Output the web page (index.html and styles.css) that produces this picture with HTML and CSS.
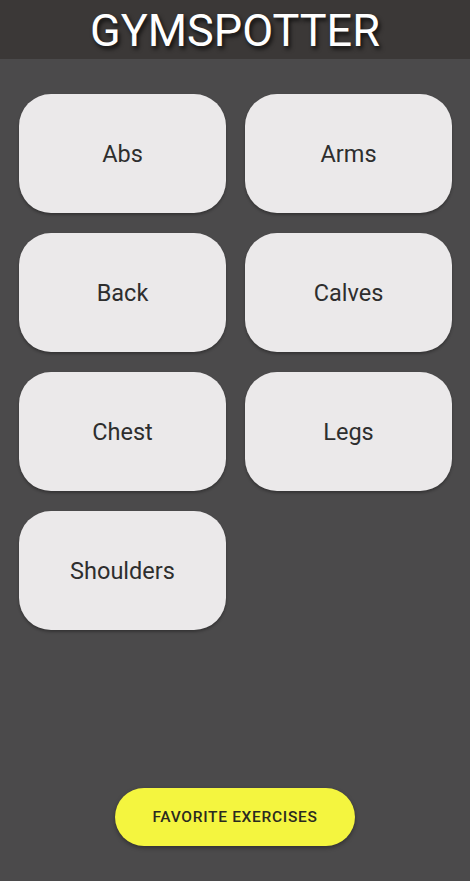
FILE: index.html
```html
<!DOCTYPE html>
<html>
<head>
<meta charset="utf-8">
<link rel="stylesheet" href="styles.css">
</head>
<body>
<div class="app">
  <header class="topbar"><h1 class="title">GYMSPOTTER</h1></header>
  <main class="grid">
    <button class="card">Abs</button>
    <button class="card">Arms</button>
    <button class="card">Back</button>
    <button class="card">Calves</button>
    <button class="card">Chest</button>
    <button class="card">Legs</button>
    <button class="card">Shoulders</button>
  </main>
  <footer class="footer"><button class="fav">FAVORITE EXERCISES</button></footer>
</div>
</body>
</html>
```
FILE: styles.css
```css
html, body { margin: 0; padding: 0; height: 100%; }
body { background: #4b4a4b; font-family: Roboto, "Noto Sans", sans-serif; }
.app { display: flex; flex-direction: column; height: 881px; }
.topbar { background: #3b3837; height: 59px; display: flex; align-items: center; justify-content: center; }
.title { margin: 0; color: #fff; font-weight: 400; font-size: 45px; letter-spacing: 0; text-shadow: 2px 3px 4px rgba(0,0,0,0.75); line-height: 1; position: relative; top: 1px; }
.grid { display: grid; grid-template-columns: 207px 207px; grid-auto-rows: 119px; column-gap: 19px; row-gap: 20px; padding: 35px 19px 0 19px; }
.card { border: none; background: #ebe9ea; border-radius: 32px; font-family: Roboto, sans-serif; font-size: 23.5px; color: #2e2e2e; box-shadow: 0 2px 3px rgba(0,0,0,0.3); padding: 0; }
.footer { margin-top: auto; display: flex; justify-content: center; padding-bottom: 35px; }
.fav { width: 240px; height: 58px; border: none; border-radius: 29px; background: #f4f53f; color: #2a2a20; font-family: Roboto, sans-serif; font-weight: 500; font-size: 15.5px; letter-spacing: 0.7px; box-shadow: 0 2px 4px rgba(0,0,0,0.35); padding: 0; }
```
